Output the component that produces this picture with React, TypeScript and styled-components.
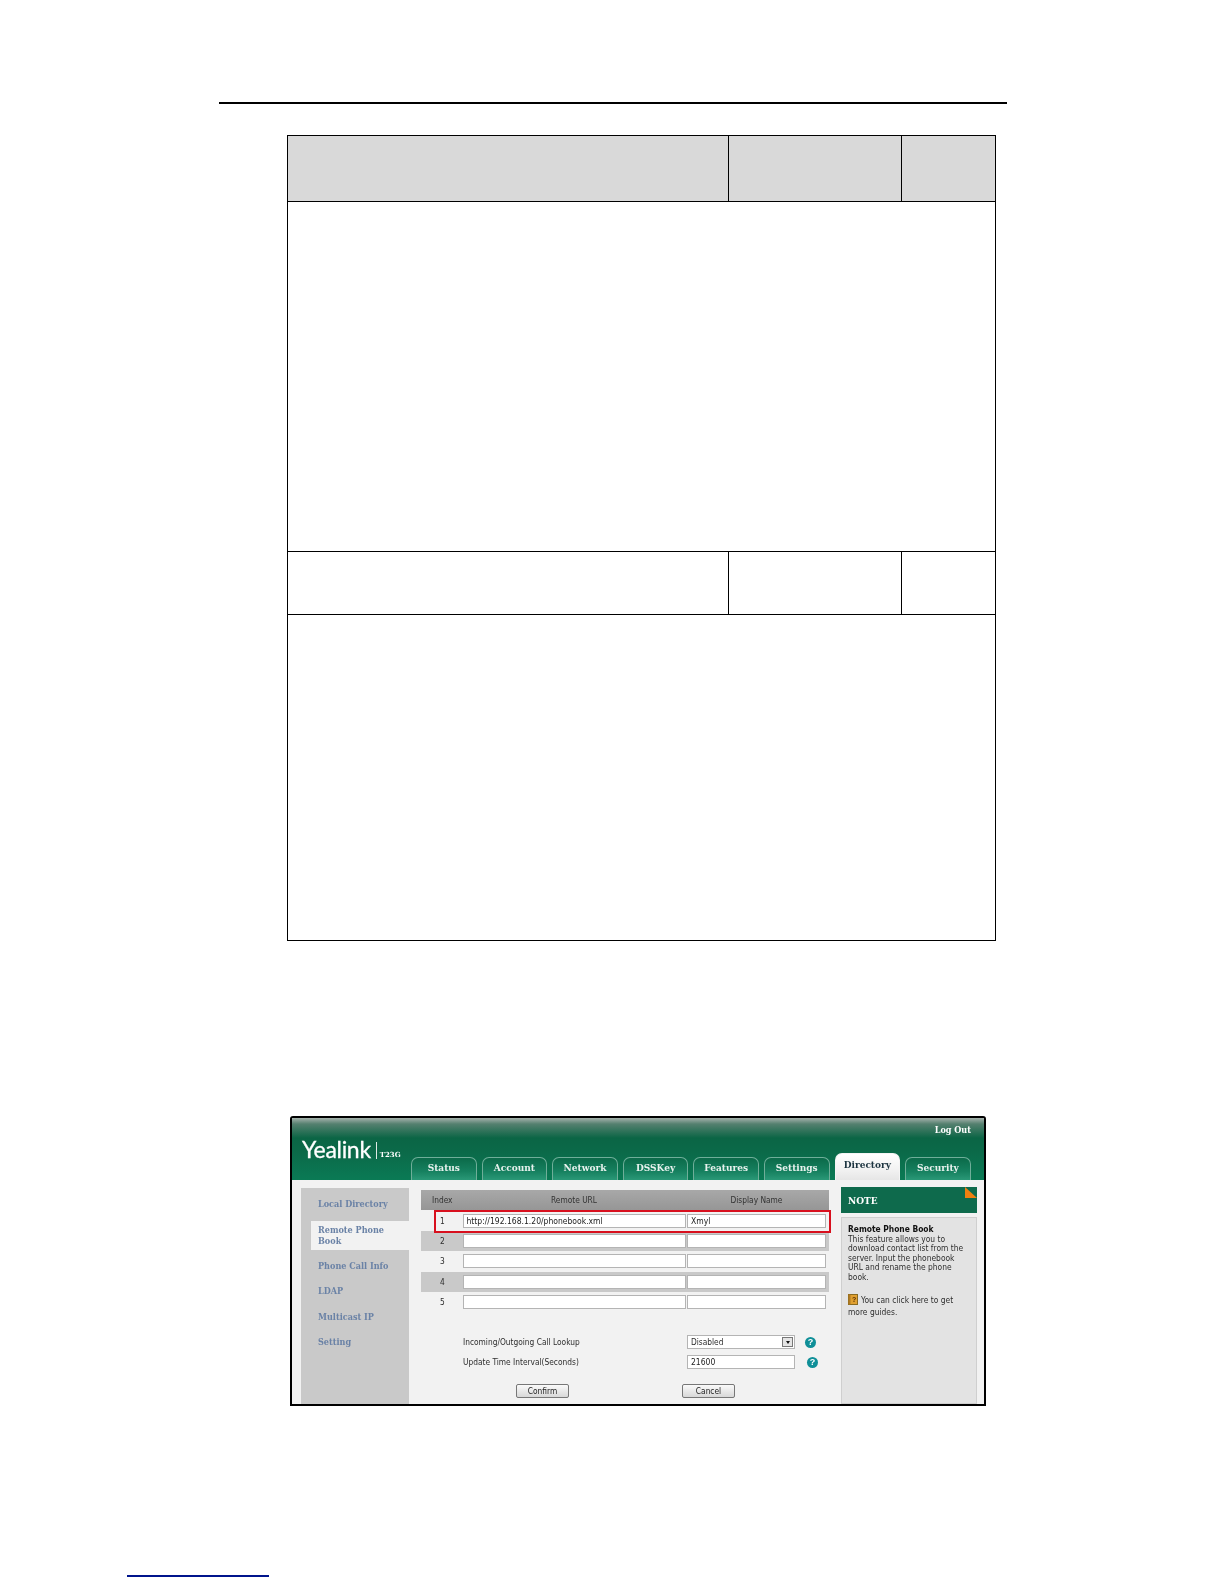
import React from 'react'
import styled, { createGlobalStyle } from 'styled-components'

const GlobalStyle = createGlobalStyle`
  html, body {
    margin: 0;
    padding: 0;
    background: #fff;
  }
`

const uiFont = `"DejaVu Sans", "Liberation Sans", sans-serif`
const headFont = `"DejaVu Serif", "Liberation Serif", serif`

const Page = styled.div`
  width: 1224px;
  height: 1584px;
  padding-top: 102px;
  box-sizing: border-box;
  overflow: hidden;
`

const TopRule = styled.div`
  width: 788px;
  height: 2px;
  margin-left: 219px;
  background: #000;
`

const SpecTable = styled.table`
  width: 708px;
  margin: 31px 0 0 287px;
  border-collapse: collapse;
  table-layout: fixed;
`

const SpecCell = styled.td<{ $h: number; $shade?: boolean }>`
  height: ${p => p.$h}px;
  padding: 0;
  border: 1.3px solid #000;
  background: ${p => (p.$shade ? '#d9d9d9' : '#fff')};
`

const Panel = styled.div`
  width: 696px;
  height: 290px;
  margin: 175px 0 0 290px;
  border: 2px solid #000;
  box-sizing: border-box;
  background: #f2f2f2;
  overflow: hidden;
  border-radius: 3px 3px 0 0;
  filter: blur(0.3px);
`

const Header = styled.div`
  height: 62px;
  display: flex;
  flex-direction: column;
  background: linear-gradient(#a5b2ac 0, #55806f 6px, #0b6545 20px, #0b6a49 35px, #0a7a55 62px);
`

const TopBar = styled.div`
  height: 17px;
  display: flex;
  align-items: flex-end;
  justify-content: flex-end;
  padding-right: 13px;
  color: #fff;
  font: bold 9px ${headFont};
  font-stretch: condensed;
`

const MainBar = styled.div`
  flex: 1;
  display: flex;
  align-items: flex-end;
`

const Brand = styled.div`
  width: 109px;
  margin-left: 10px;
  height: 42px;
  display: flex;
  align-items: flex-start;
  color: #fff;
`

const LogoWord = styled.span`
  font: 400 23px/24px Lato, sans-serif;
  letter-spacing: -0.3px;
  -webkit-text-stroke: 0.3px #fff;
  margin-top: -1px;
`

const LogoModel = styled.span`
  margin: 4px 0 0 5px;
  padding: 9px 0 0 3px;
  height: 8px;
  border-left: 1px solid #dfe9e5;
  font: bold 7px/8px ${headFont};
`

const Tabs = styled.div`
  display: flex;
  align-items: flex-end;
  gap: 5px;
`

const Tab = styled.div<{ $active?: boolean }>`
  width: 65.6px;
  height: ${p => (p.$active ? 27 : 23)}px;
  box-sizing: border-box;
  display: flex;
  align-items: center;
  justify-content: center;
  padding-bottom: ${p => (p.$active ? 5 : 3)}px;
  border: 1px solid ${p => (p.$active ? '#f4f4f4' : '#6fae99')};
  border-bottom: 0;
  border-radius: 7px 7px 0 0;
  background: ${p =>
    p.$active
      ? 'linear-gradient(#ffffff, #f2f2f2 60%, #e6e6e6)'
      : 'linear-gradient(#0b6a49, #16805f 60%, #2a9877)'};
  color: ${p => (p.$active ? '#1c3440' : '#e8f2ee')};
  font: bold 10px ${headFont};
  font-stretch: condensed;
`

const Body = styled.div`
  display: flex;
  align-items: stretch;
  height: 224px;
`

const Sidebar = styled.div`
  width: 108px;
  margin: 8px 0 0 9px;
  background: #c9c9c9;
`

const NavItem = styled.div<{ $active?: boolean; $h: number }>`
  height: ${p => p.$h}px;
  box-sizing: border-box;
  display: flex;
  align-items: center;
  padding-left: ${p => (p.$active ? 7 : 17)}px;
  margin: ${p => (p.$active ? '0 -12px 4px 10px' : '0')};
  background: ${p => (p.$active ? '#f2f2f2' : 'transparent')};
  color: #6a82a6;
  font: bold 9px/11px ${headFont};
  font-stretch: condensed;
`

const Main = styled.div`
  width: 408px;
  margin: 10px 0 0 12px;
`

const GridRow = styled.div<{ $shade?: boolean; $marked?: boolean }>`
  position: relative;
  height: 20.4px;
  display: grid;
  grid-template-columns: 40px 223px 139px;
  column-gap: 1.5px;
  align-items: center;
  background: ${p => (p.$shade ? '#c9c9c9' : 'transparent')};
  color: #2e2e2e;
  font: 8.3px ${uiFont};
  font-stretch: condensed;

  ${p =>
    p.$marked &&
    `&::after {
      content: '';
      position: absolute;
      z-index: 1;
      top: 0;
      bottom: -2px;
      left: 13px;
      right: -2px;
      border: 2px solid #d8101e;
    }`}
`

const HeadRow = styled(GridRow)`
  background: linear-gradient(#a8a8a8, #969696);
  color: #333;
`

const HeadCell = styled.span<{ $indent?: number }>`
  margin-left: ${p => p.$indent ?? 0}px;
  text-align: ${p => (p.$indent !== undefined ? 'left' : 'center')};
`

const IndexCell = styled.span`
  padding-left: 19px;
`

const Field = styled.input`
  width: 100%;
  height: 14px;
  box-sizing: border-box;
  padding: 0 3px;
  border: 1px solid #b4b4b4;
  border-radius: 0;
  background: #fff;
  color: #222;
  font: 8.5px ${uiFont};
  font-stretch: condensed;
  outline: none;
`

const OptionRow = styled.div`
  height: 20px;
  display: grid;
  grid-template-columns: 224px 108px auto;
  align-items: center;
  padding-left: 42px;
  color: #2e2e2e;
  font: 8.3px ${uiFont};
  font-stretch: condensed;
`

const Options = styled.div`
  margin-top: 20px;
`

const SelectBox = styled.div`
  height: 14px;
  box-sizing: border-box;
  display: flex;
  align-items: center;
  justify-content: space-between;
  padding: 0 1px 0 3px;
  border: 1px solid #b4b4b4;
  background: #fff;
`

const SelectArrow = styled.span`
  width: 11px;
  height: 10px;
  box-sizing: border-box;
  display: flex;
  align-items: center;
  justify-content: center;
  border: 1px solid #777;
  background: #e4e4e4;

  &::before {
    content: '';
    border: 2.5px solid transparent;
    border-top: 3px solid #111;
    border-bottom: 0;
  }
`

const HelpIcon = styled.span<{ $gap: number }>`
  width: 11px;
  height: 11px;
  margin-left: ${p => p.$gap}px;
  border-radius: 50%;
  display: flex;
  align-items: center;
  justify-content: center;
  background: #0f8f98;
  color: #fff;
  font: bold 9px/11px "Liberation Sans", sans-serif;
`

const Actions = styled.div`
  display: flex;
  margin-top: 12px;
  padding-left: 95px;
  gap: 113px;
`

const ActionButton = styled.div`
  width: 53px;
  height: 14px;
  box-sizing: border-box;
  display: flex;
  align-items: center;
  justify-content: center;
  border: 1px solid #777;
  border-radius: 2px;
  background: linear-gradient(#fafafa, #d8d8d8);
  color: #222;
  font: 8.3px ${uiFont};
  font-stretch: condensed;
`

const Note = styled.div`
  width: 136px;
  margin: 7px 0 0 12px;
  display: flex;
  flex-direction: column;
`

const NoteHead = styled.div`
  position: relative;
  height: 26px;
  display: flex;
  align-items: center;
  padding-left: 7px;
  background: #0e6a4c;
  color: #fff;
  font: bold 10px ${headFont};
  font-stretch: condensed;

  &::after {
    content: '';
    position: absolute;
    top: 0;
    right: 0;
    width: 12px;
    height: 11px;
    background: #f08010;
    clip-path: polygon(0 0, 0 100%, 100% 100%);
  }
`

const NoteBody = styled.div`
  flex: 1;
  margin-top: 4px;
  padding: 7px 6px;
  border: 1px solid #cfcfcf;
  background: #e3e3e3;
  color: #2e2e2e;
  font: 8.4px/9.6px ${uiFont};
  font-stretch: condensed;
  white-space: nowrap;
`

const NoteTitle = styled.div`
  font-weight: bold;
  color: #111;
`

const NoteHint = styled.div`
  margin-top: 11px;
  line-height: 12px;
`

const FooterLink = styled.div`
  width: 142px;
  height: 1.5px;
  margin: 169px 0 0 127px;
  background: #00148c;
`

const BookIcon = () => (
  <svg width="10" height="11" viewBox="0 0 10 11" style={{ verticalAlign: '-2px', marginRight: 3 }}>
    <rect x="0.5" y="0.5" width="9" height="10" fill="#e0a030" stroke="#8a6a20" />
    <rect x="0.5" y="0.5" width="2" height="10" fill="#b07a20" />
    <text x="4" y="8" fontSize="7" fontWeight="bold" fill="#5a3000" fontFamily="Liberation Sans">?</text>
  </svg>
)

const tabs = ['Status', 'Account', 'Network', 'DSSKey', 'Features', 'Settings', 'Directory', 'Security']

const rows = [
  { index: 1, url: 'http://192.168.1.20/phonebook.xml', name: 'Xmyl' },
  { index: 2, url: '', name: '' },
  { index: 3, url: '', name: '' },
  { index: 4, url: '', name: '' },
  { index: 5, url: '', name: '' }
]

export default function App() {
  return (
    <Page>
      <GlobalStyle />
      <TopRule />

      <SpecTable>
        <colgroup>
          <col style={{ width: 441 }} />
          <col style={{ width: 173 }} />
          <col style={{ width: 94 }} />
        </colgroup>
        <tbody>
          <tr>
            <SpecCell $h={65} $shade />
            <SpecCell $h={65} $shade />
            <SpecCell $h={65} $shade />
          </tr>
          <tr><SpecCell $h={349} colSpan={3} /></tr>
          <tr>
            <SpecCell $h={62} />
            <SpecCell $h={62} />
            <SpecCell $h={62} />
          </tr>
          <tr><SpecCell $h={325} colSpan={3} /></tr>
        </tbody>
      </SpecTable>

      <Panel>
        <Header>
          <TopBar>Log Out</TopBar>
          <MainBar>
            <Brand>
              <LogoWord>Yealink</LogoWord>
              <LogoModel>T23G</LogoModel>
            </Brand>
            <Tabs>
              {tabs.map(t => (
                <Tab key={t} $active={t === 'Directory'}>{t}</Tab>
              ))}
            </Tabs>
          </MainBar>
        </Header>

        <Body>
          <Sidebar>
            <NavItem $h={33}>Local Directory</NavItem>
            <NavItem $h={29} $active>Remote Phone<br />Book</NavItem>
            <NavItem $h={25.3}>Phone Call Info</NavItem>
            <NavItem $h={25.3}>LDAP</NavItem>
            <NavItem $h={25.3}>Multicast IP</NavItem>
            <NavItem $h={25.3}>Setting</NavItem>
          </Sidebar>

          <Main>
            <HeadRow>
              <HeadCell $indent={11}>Index</HeadCell>
              <HeadCell>Remote URL</HeadCell>
              <HeadCell>Display Name</HeadCell>
            </HeadRow>
            {rows.map(r => (
              <GridRow key={r.index} $shade={r.index % 2 === 0} $marked={r.index === 1}>
                <IndexCell>{r.index}</IndexCell>
                <Field readOnly value={r.url} />
                <Field readOnly value={r.name} />
              </GridRow>
            ))}

            <Options>
              <OptionRow>
                <span>Incoming/Outgoing Call Lookup</span>
                <SelectBox>Disabled<SelectArrow /></SelectBox>
                <HelpIcon $gap={10}>?</HelpIcon>
              </OptionRow>
              <OptionRow>
                <span>Update Time Interval(Seconds)</span>
                <Field readOnly value="21600" />
                <HelpIcon $gap={12}>?</HelpIcon>
              </OptionRow>
            </Options>

            <Actions>
              <ActionButton>Confirm</ActionButton>
              <ActionButton>Cancel</ActionButton>
            </Actions>
          </Main>

          <Note>
            <NoteHead>NOTE</NoteHead>
            <NoteBody>
              <NoteTitle>Remote Phone Book</NoteTitle>
              This feature allows you to<br />
              download contact list from the<br />
              server. Input the phonebook<br />
              URL and rename the phone<br />
              book.
              <NoteHint>
                <BookIcon />You can click here to get<br />
                more guides.
              </NoteHint>
            </NoteBody>
          </Note>
        </Body>
      </Panel>

      <FooterLink />
    </Page>
  )
}
